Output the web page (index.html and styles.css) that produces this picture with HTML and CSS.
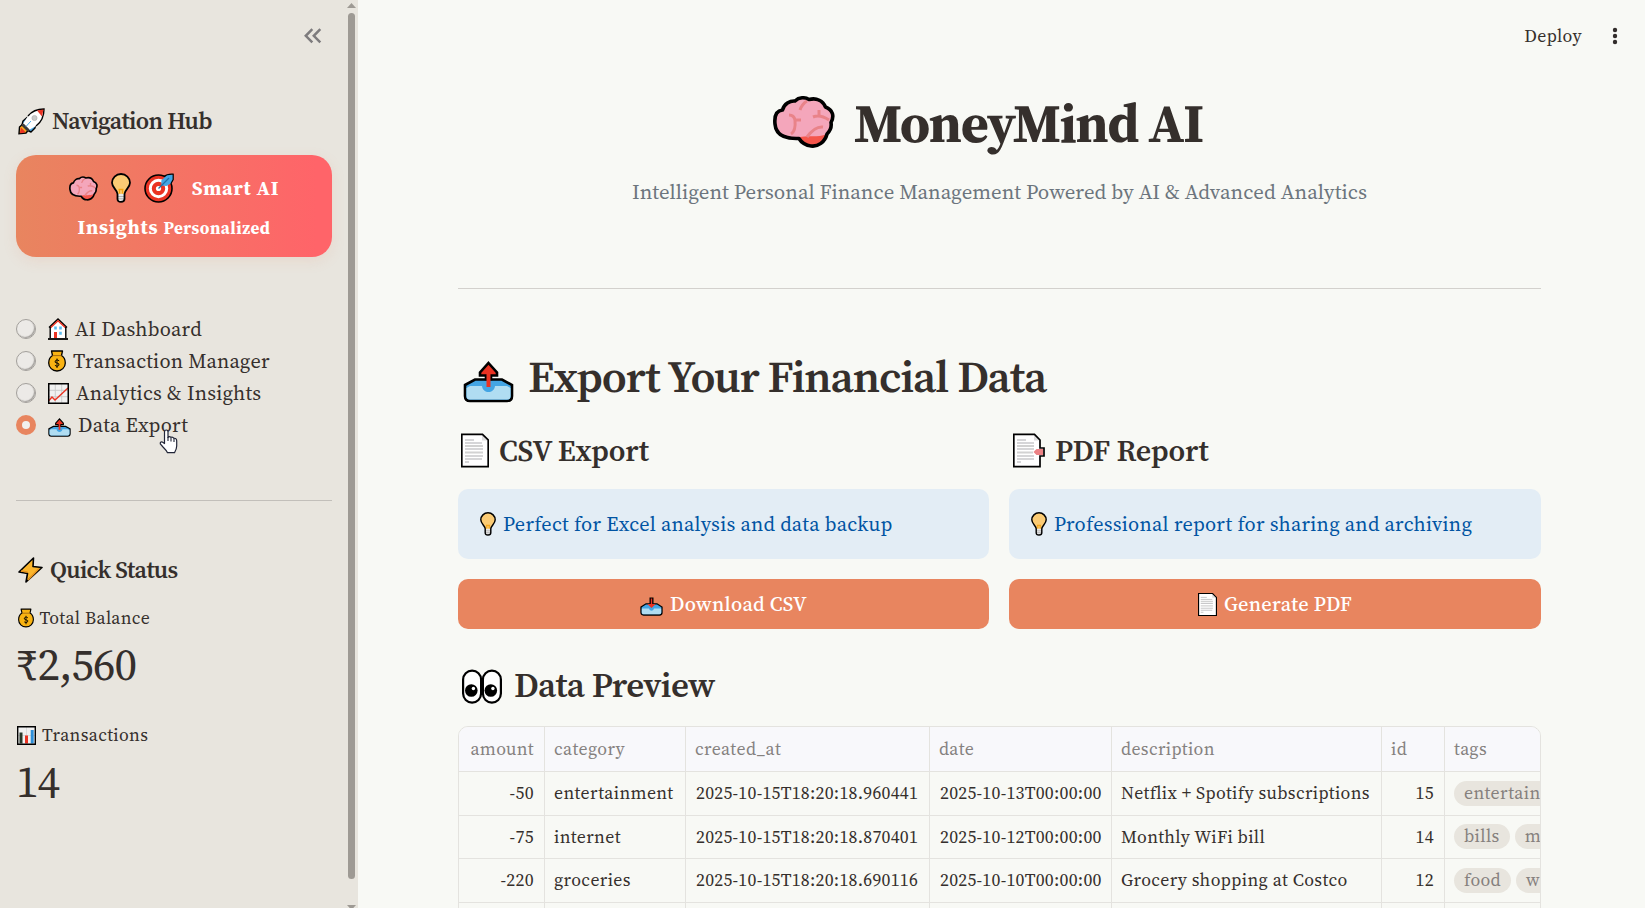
FILE: index.html
```html
<!DOCTYPE html>
<html lang="en">
<head>
<meta charset="utf-8">
<title>MoneyMind AI</title>
<link rel="stylesheet" href="styles.css">
</head>
<body>
<svg class="sprite" aria-hidden="true">
  <symbol id="brain" viewBox="0 0 62 52">
    <path d="M2 28C1 18 5 14.500 9.500 14C11 8 17 4.500 22 5C26 1 32 1 36 3.500C44 1.500 50 5 52.500 11C60 14 61.500 20 58 26.500C59 32 56 36 54 38C52 46 45 51 38 50C33 50 28 46 26 42.500C16 43 3 41 2 28Z" fill="#f4a6bb"/>
    <path d="M27 41C35 39 44 42 54 38C52 46 45 51 38 50C33 50 29 46 27 41Z" fill="#f5564c"/>
    <path d="M16 19Q21 19 22 24H28M22 24Q23 35 18 38M27 14Q29 8 34 5M46 14V20M40 21Q47 18 56 24M34 41Q42 30 50 31" fill="none" stroke="#e98389" stroke-width="3"/>
    <path d="M2 28C1 18 5 14.500 9.500 14C11 8 17 4.500 22 5C26 1 32 1 36 3.500C44 1.500 50 5 52.500 11C60 14 61.500 20 58 26.500C59 32 56 36 54 38C52 46 45 51 38 50C33 50 28 46 26 42.500C16 43 3 41 2 28Z" fill="none" stroke="#000" stroke-width="3.600" stroke-linejoin="round"/>
  </symbol>
  <symbol id="bulb" viewBox="0 0 20 30">
    <path d="M6.500 20.500V26Q6.500 28.500 10 28.500T13.500 26V20.500Z" fill="#e8e8e8"/>
    <path d="M6.500 21C6.500 17 1 15 1 9.800A9 8.800 0 0 1 19 9.800C19 15 13.500 17 13.500 21Z" fill="#fbcb74"/>
    <path d="M8.500 20.500V16.500M11.500 20.500V16.500M7.500 16.500H12.500" stroke="#f5a412" stroke-width="1.300"/>
    <path d="M6.500 23.500h7M6.500 25.800h7" stroke="#999" stroke-width=".7"/>
    <path d="M6.500 21C6.500 17 1 15 1 9.800A9 8.800 0 0 1 19 9.800C19 15 13.500 17 13.500 21V26Q13.500 28.800 10 28.800T6.500 26Z" fill="none" stroke="#000" stroke-width="1.800"/>
  </symbol>
  <symbol id="target" viewBox="0 0 30 30">
    <circle cx="14.500" cy="15.500" r="13.500" fill="#ea3323" stroke="#000" stroke-width="1.600"/>
    <circle cx="14.500" cy="15.500" r="8.200" fill="none" stroke="#fff" stroke-width="3"/>
    <circle cx="14.500" cy="15.500" r="2.600" fill="#fff"/>
    <path d="M17.500 12.500L17.300 7.500L23.500 1.500L29 1.800L29 6L27.500 10L22.500 13Z" fill="#43a5e4"/>
    <path d="M14.500 15.500L25 5" stroke="#1f6fa8" stroke-width="1.200"/>
    <path d="M20 3.500Q23 .8 29.200 1.200V6.500L27 10.500" fill="none" stroke="#000" stroke-width="1.200"/>
  </symbol>
  <symbol id="rocket" viewBox="0 0 27 27">
    <path d="M5 13L9 9.500L14 9L18 14L17 20L13 24L9 22L4 17Z" fill="#4aa9e8" stroke="#000" stroke-width="1.400" stroke-linejoin="round"/>
    <path d="M1.500 19L5 16L10.500 22L8 25L1 25.800Z" fill="#f6a51b" stroke="#000" stroke-width="1.400"/>
    <path d="M4.500 16.500L10 8C14 3 19 1 26 1C26 8 23.500 14 18 18L10 22.500Z" fill="#fff"/>
    <path d="M10 8C14 3 19 1 26 1C26 8 23.500 14 18 18" fill="none" stroke="#000" stroke-width="1.400"/>
    <path d="M3 19.500L7.500 24L5 25L1.800 25.200Z" fill="#ea3323"/>
    <path d="M19 2.500L25.500 1.500L24 8.500Z" fill="#ea3323"/>
    <path d="M4.500 16.500L10.500 22.500" stroke="#3b3b3b" stroke-width="3"/>
    <path d="M8 18.500L13 13" stroke="#4aa9e8" stroke-width="1"/>
    <circle cx="16.500" cy="10" r="2.600" fill="#c9c9c9" stroke="#aaa" stroke-width=".6"/>
  </symbol>
  <symbol id="house" viewBox="0 0 20 22">
    <path d="M3 21V9L10 2.500L17 9V21Z" fill="#fff"/>
    <path d="M1 9.500L10 1L19 9.500" fill="none" stroke="#000" stroke-width="1.400"/>
    <path d="M2.500 9.800L10 2.800L17.500 9.800" fill="none" stroke="#ea3323" stroke-width="1.500"/>
    <path d="M2.200 9V20M17.800 9V20" stroke="#000" stroke-width="1.400"/>
    <path d="M0 21H20" stroke="#000" stroke-width="1.800"/>
    <path d="M6.200 8.500h2.600v3H6.200zM11.200 8.500h2.600v3h-2.600zM11.200 13.800h2.600v3h-2.600z" fill="#5dbdf0"/>
    <path d="M6 14h3v6H6z" fill="#ea3323"/>
  </symbol>
  <symbol id="bag" viewBox="0 0 18 22">
    <path d="M4.500 5.500L3.500 1H14.500L13.500 5.500C16 7 17.300 10 17.300 13A8.300 8 0 0 1 .7 13C.7 10 2 7 4.500 5.500Z" fill="#f9b313" stroke="#000" stroke-width="1.300" stroke-linejoin="round"/>
    <path d="M4.500 5.600H13.500" stroke="#a56b12" stroke-width="1"/>
    <path d="M11.200 10.800Q9 9 7.400 10.700T9 13T10.700 15.500T6.900 15.300M9 8.500V18" fill="none" stroke="#000" stroke-width=".9"/>
  </symbol>
  <symbol id="chart" viewBox="0 0 21 21">
    <path d="M.7.700H20.300V20.300H.7Z" fill="#f1f1f1"/>
    <path d="M1 7.300H20M1 13.700H20M7.300 1V20M13.700 1V20" stroke="#c9c9c9" stroke-width=".9"/>
    <path d="M1 17.500L4 14L7 17L20 5" fill="none" stroke="#ea3323" stroke-width="1.400"/>
    <path d="M.7.700H20.300V20.300H.7Z" fill="none" stroke="#000" stroke-width="1.600"/>
  </symbol>
  <symbol id="bars" viewBox="0 0 19 19">
    <path d="M.7.700H18.300V18.300H.7Z" fill="#f1f1f1"/>
    <path d="M9.500 1V18M1 9.500H18" stroke="#d5d5d5" stroke-width=".8"/>
    <path d="M2.500 6.500h3v11h-3z" fill="#27382a"/><path d="M8 9.500h3v8H8z" fill="#ea3323"/><path d="M13.700 4h3v13.500h-3z" fill="#2e8fd8"/>
    <path d="M.7.700H18.300V18.300H.7Z" fill="none" stroke="#000" stroke-width="1.400"/>
  </symbol>
  <symbol id="outbox" viewBox="0 0 51 42">
    <path d="M2 24L12 18.500H39L49 24V35Q49 40 44 40H7Q2 40 2 35Z" fill="#43a5e4" stroke="#000" stroke-width="2.600"/>
    <path d="M3.500 27L7 25H19C20 33 31 33 32 25H44L47.500 27V35Q47.500 38.600 44 38.600H7Q3.500 38.600 3.500 35Z" fill="#b0ddf2"/>
    <path d="M25.500 2L34 11.500V14.500H28V18H23V14.500H17V11.500Z" fill="#ea3323" stroke="#000" stroke-width="2.600"/>
    <path d="M25.500 26V10" stroke="#ea3323" stroke-width="4"/>
  </symbol>
  <symbol id="inbox" viewBox="0 0 23 19">
    <path d="M1 10L6 6.800H17L22 10V15.500Q22 18 19.500 18H3.500Q1 18 1 15.500Z" fill="#43a5e4" stroke="#000" stroke-width="1.300"/>
    <path d="M1.800 11.500H9C10 14.500 13 14.500 14 11.500H21.200V15.500Q21.200 17.200 19.500 17.200H3.500Q1.800 17.200 1.800 15.500Z" fill="#b0ddf2"/>
    <path d="M9.500 .5H13.500V6.800H9.500Z" fill="#000"/>
    <path d="M11.500 1.500V8M9 7.600H14L11.500 10Z" stroke="#ea3323" stroke-width="1.400" fill="#ea3323"/>
  </symbol>
  <symbol id="page" viewBox="0 0 28 34">
    <path d="M1 1H21.500L27 6.500V33H1Z" fill="#fff"/>
    <path d="M21 1.500V7H27Z" fill="#ddd"/>
    <path d="M4 6.500H13M4 9.500H21M4 15.500H22M4 22.500H22M4 25.500H21M4 28.500H8" stroke="#a4a4a8" stroke-width=".9"/>
    <path d="M4 12.500H22M4 19H22" stroke="#d2d2d2" stroke-width="2"/>
    <path d="M.8.800H21.500L27.200 6.500V33.200H.8Z" fill="none" stroke="#000" stroke-width="1.700"/>
  </symbol>
  <symbol id="tabs" viewBox="0 0 32 34">
    <path d="M1 1H21.500L27 6.500V14.500H31V22.500H27V33H1Z" fill="#fff"/>
    <path d="M21 1.500V7H27Z" fill="#ddd"/>
    <path d="M4 6.500H13M4 9.500H21M4 15.500H21M4 22.500H21M4 25.500H21M4 28.500H8" stroke="#a4a4a8" stroke-width=".9"/>
    <path d="M4 12.500H21M4 19H20" stroke="#d2d2d2" stroke-width="2"/>
    <path d="M20.500 18.500L23.500 15.500H30V21.500H23.500Z" fill="#ec8285"/>
    <path d="M.8.800H21.500L27 6.500V14.500H31V22.500H27V33.200H.8Z" fill="none" stroke="#000" stroke-width="1.700"/>
  </symbol>
  <symbol id="eyes" viewBox="0 0 40 34">
    <rect x="1.100" y="1.100" width="18" height="32" rx="9" fill="#fff" stroke="#000" stroke-width="2.200"/>
    <rect x="20.900" y="1.100" width="18" height="32" rx="9" fill="#fff" stroke="#000" stroke-width="2.200"/>
    <circle cx="9.300" cy="21" r="6.300"/><circle cx="28.800" cy="21" r="6.300"/>
    <circle cx="11.400" cy="19" r="1.700" fill="#fff"/><circle cx="30.900" cy="19" r="1.700" fill="#fff"/>
  </symbol>
  <symbol id="bolt" viewBox="0 0 25 26">
    <path d="M15.500 1L1 15L9.500 16.500L8 25L24 10.500L15 9.500Z" fill="#fbb62c" stroke="#000" stroke-width="1.600" stroke-linejoin="round"/>
    <path d="M3 14L9.500 15M10 23L21 11.500" stroke="#e8941e" stroke-width="1.500"/>
  </symbol>
</svg>

<div class="app">
  <aside class="sidebar">
    <div class="side-content">
      <div class="side-top">
        <svg class="collapse" viewBox="0 0 18 16"><path d="M8.300 1.200L1.800 7.800L8.300 14.400M16.300 1.200L9.800 7.800L16.300 14.400" fill="none" stroke="#7d7b7d" stroke-width="2.500"/></svg>
      </div>
      <h3 class="side-heading nav-heading"><svg class="i-rocket"><use href="#rocket"/></svg><span>Navigation Hub</span></h3>
      <div class="hub-card">
        <div class="hub-line"><svg class="i-brain-s"><use href="#brain"/></svg><svg class="i-bulb-m"><use href="#bulb"/></svg><svg class="i-target"><use href="#target"/></svg><span class="hub-smart">Smart AI</span></div>
        <div class="hub-line hub-second"><span>Insights</span> <small>Personalized</small></div>
      </div>
      <nav class="menu">
        <label class="option"><i class="radio"></i><svg class="i-house"><use href="#house"/></svg><span>AI Dashboard</span></label>
        <label class="option"><i class="radio"></i><svg class="i-bag"><use href="#bag"/></svg><span>Transaction Manager</span></label>
        <label class="option"><i class="radio"></i><svg class="i-chart"><use href="#chart"/></svg><span>Analytics &amp; Insights</span></label>
        <label class="option"><i class="radio checked"></i><svg class="i-outbox-s"><use href="#outbox"/></svg><span>Data Export</span></label>
      </nav>
      <hr class="side-rule">
      <h3 class="side-heading"><svg class="i-bolt"><use href="#bolt"/></svg><span>Quick Status</span></h3>
      <div class="metric">
        <div class="metric-label"><svg class="i-bag-s"><use href="#bag"/></svg><span>Total Balance</span></div>
        <div class="metric-value">₹2,560</div>
      </div>
      <div class="metric">
        <div class="metric-label"><svg class="i-bars"><use href="#bars"/></svg><span>Transactions</span></div>
        <div class="metric-value">14</div>
      </div>
    </div>
    <div class="scrollbar"><i class="arrow-up"></i><i class="thumb"></i><i class="arrow-down"></i></div>
  </aside>

  <main class="main">
    <header class="toolbar">
      <span>Deploy</span>
      <svg class="dots" viewBox="0 0 6 18"><g fill="#322d2b"><circle cx="3" cy="3" r="2.200"/><circle cx="3" cy="9" r="2.200"/><circle cx="3" cy="15" r="2.200"/></g></svg>
    </header>
    <div class="content">
      <h1 class="title"><svg class="i-brain"><use href="#brain"/></svg><span>MoneyMind AI</span></h1>
      <p class="subtitle">Intelligent Personal Finance Management Powered by AI &amp; Advanced Analytics</p>
      <hr class="rule">
      <h1 class="export-heading"><svg class="i-outbox"><use href="#outbox"/></svg><span>Export Your Financial Data</span></h1>
      <div class="columns">
        <section class="column">
          <h3 class="col-heading"><svg class="i-page"><use href="#page"/></svg><span>CSV Export</span></h3>
          <div class="info"><svg class="i-bulb"><use href="#bulb"/></svg><span>Perfect for Excel analysis and data backup</span></div>
          <button class="button"><svg class="i-inbox"><use href="#inbox"/></svg><span>Download CSV</span></button>
        </section>
        <section class="column">
          <h3 class="col-heading"><svg class="i-tabs"><use href="#tabs"/></svg><span>PDF Report</span></h3>
          <div class="info"><svg class="i-bulb"><use href="#bulb"/></svg><span>Professional report for sharing and archiving</span></div>
          <button class="button"><svg class="i-page-s"><use href="#page"/></svg><span>Generate PDF</span></button>
        </section>
      </div>
      <h2 class="preview-heading"><svg class="i-eyes"><use href="#eyes"/></svg><span>Data Preview</span></h2>
      <div class="table-wrap">
        <table class="data">
          <colgroup><col class="c-amount"><col class="c-category"><col class="c-created"><col class="c-date"><col class="c-desc"><col class="c-id"><col class="c-tags"></colgroup>
          <thead><tr><th class="num">amount</th><th>category</th><th>created_at</th><th>date</th><th>description</th><th>id</th><th>tags</th></tr></thead>
          <tbody>
            <tr><td class="num">-50</td><td>entertainment</td><td class="stamp">2025-10-15T18:20:18.960441</td><td class="stamp">2025-10-13T00:00:00</td><td>Netflix + Spotify subscriptions</td><td class="num">15</td><td><div class="tags"><span class="tag">entertainment</span></div></td></tr>
            <tr><td class="num">-75</td><td>internet</td><td class="stamp">2025-10-15T18:20:18.870401</td><td class="stamp">2025-10-12T00:00:00</td><td>Monthly WiFi bill</td><td class="num">14</td><td><div class="tags"><span class="tag">bills</span><span class="tag">monthly</span></div></td></tr>
            <tr><td class="num">-220</td><td>groceries</td><td class="stamp">2025-10-15T18:20:18.690116</td><td class="stamp">2025-10-10T00:00:00</td><td>Grocery shopping at Costco</td><td class="num">12</td><td><div class="tags"><span class="tag">food</span><span class="tag">weekly</span></div></td></tr>
            <tr><td></td><td></td><td></td><td></td><td></td><td></td><td></td></tr>
          </tbody>
        </table>
      </div>
    </div>
  </main>
</div>
<svg class="cursor" viewBox="0 0 19 25"><path d="M5.500 14.500V3Q5.500 1 7.300 1T9 3V8.500Q10 6.800 12 8.300Q13.700 7.500 15 9.300Q17.700 9 17.700 12V17Q17.700 20 15.500 23.700H8.500Q7.500 21.500 4 18L1.300 14.800Q1 12.500 3.300 13Z" fill="#fff" stroke="#222638" stroke-width="1.200" stroke-linejoin="round"/><path d="M9 8V12M12 8.500V12.500M15 9.500V13" stroke="#222638" stroke-width="1.100"/></svg>
</body>
</html>
```
FILE: styles.css
```css
* { box-sizing: border-box; }
body {
  margin: 0;
  height: 908px;
  overflow: hidden;
  font-family: "Source Serif 4", "Source Serif Pro", "Noto Serif", "Liberation Serif", serif;
  font-size: 20.300px;
  letter-spacing: .25px;
  color: #352f2c;
  background: #f8f9f5;
  white-space: nowrap;
}
h1, h2, h3, p, hr { margin: 0; font-weight: 600; }
svg { display: block; flex: none; }
.sprite { position: absolute; width: 0; height: 0; }
.app { display: flex; height: 908px; }

/* Sidebar */
.sidebar { display: flex; flex: none; width: 358px; background: #e8e5de; }
.side-content { width: 347px; padding: 0 15px 0 16px; }
.side-top { display: flex; justify-content: flex-end; height: 106px; padding: 28px 10px 0 0; }
.collapse { width: 18px; height: 16px; }
.side-heading { display: flex; align-items: center; height: 30px; font-size: 24px; line-height: 30px; letter-spacing: -.65px; }
.i-rocket { width: 27px; height: 27px; margin: 0 7px 0 2px; }
.i-bolt { width: 25px; height: 26px; margin: 0 7px 0 2px; }
.hub-card {
  height: 102px;
  margin-top: 19px;
  padding-top: 14px;
  border-radius: 20px;
  background: linear-gradient(90deg, #e8855f, #ff6469 95%);
  box-shadow: 0 4px 14px rgba(232, 133, 95, .13);
  color: #fff;
  font-size: 20px;
  font-weight: 700;
  letter-spacing: .75px;
}
.hub-line { display: flex; align-items: center; justify-content: center; height: 38px; }
.i-brain-s { width: 29px; height: 25px; }
.i-bulb-m { width: 20px; height: 30px; margin-left: 13px; }
.i-target { width: 30px; height: 30px; margin-left: 13px; }
.hub-smart { margin-left: 18px; }
.hub-second { align-items: baseline; gap: 5px; padding-top: 6px; }
.hub-second small { font-size: 17px; letter-spacing: .5px; }
.menu { margin-top: 56px; }
.option { display: flex; align-items: center; height: 32px; }
.radio {
  width: 20px; height: 20px; margin-right: 12px;
  border-radius: 50%;
  background: #eceae7;
  border: 1px solid #a3a09c;
  box-shadow: inset -1px -1px 1px #a3a09c;
}
.radio.checked { border: 6.500px solid #e8855f; background: #f1f0ed; box-shadow: none; }
.i-house { width: 20px; height: 22px; margin-right: 7px; }
.i-bag { width: 18px; height: 22px; margin-right: 7px; }
.i-chart { width: 21px; height: 21px; margin-right: 7px; }
.i-outbox-s { width: 23px; height: 19px; margin: 5px 7px 0 0; }
.side-rule, .rule { height: 1px; border: 0; background: #c2bfba; }
.side-rule { margin: 59px 0 54px; }
.metric { height: 117px; }
.metric-label { display: flex; align-items: center; height: 30px; margin-top: 18px; font-size: 17.800px; letter-spacing: .35px; }
.metric + .metric .metric-label { margin-top: 0; }
.metric + .metric { padding-top: 0; }
.i-bag-s { width: 16px; height: 20px; margin: 0 6px 0 1.500px; }
.i-bars { width: 19px; height: 19px; margin: 0 6px 0 1px; }
.metric-value { font-size: 45px; line-height: 62px; height: 69px; letter-spacing: -1px; }
.scrollbar { width: 11px; }
.scrollbar i { display: block; }
.arrow-up { width: 9px; height: 5px; margin-top: 3px; background: #9e9a94; clip-path: polygon(50% 0, 100% 100%, 0 100%); }
.thumb { width: 7px; height: 866px; margin: 5px 0 0 1px; border-radius: 4px; background: #9e9a94; }
.arrow-down { width: 9px; height: 5px; margin-top: 26px; background: #9e9a94; clip-path: polygon(0 0, 100% 0, 50% 100%); }

/* Main area */
.main { flex: 1; height: 908px; overflow: hidden; }
.toolbar { display: flex; align-items: center; justify-content: flex-end; gap: 30px; height: 72px; padding-right: 27px; font-size: 17.800px; letter-spacing: .35px; }
.dots { width: 6px; height: 18px; }
.content { width: 1083px; margin-left: 100px; }
.title { display: flex; align-items: center; justify-content: center; height: 102px; padding-right: 23px; font-size: 54px; font-weight: 700; letter-spacing: -1.350px; }
.i-brain { width: 62px; height: 52px; margin: 0 19px 2px 0; }
.subtitle { height: 40px; margin-top: -2px; line-height: 40px; text-align: center; font-size: 20.800px; font-weight: 400; letter-spacing: .030px; color: #6c757d; }
.rule { margin-top: 76px; background: #d3d1cd; }
.export-heading { display: flex; align-items: center; height: 72px; margin-top: 51px; font-size: 45px; letter-spacing: -1.120px; }
.i-outbox { width: 51px; height: 42px; margin: 11px 14px 0 5px; }
.columns { display: flex; gap: 20px; margin-top: 18px; }
.column { flex: 0 0 531px; }
.column + .column { flex-basis: 532px; }
.col-heading { display: flex; align-items: center; height: 40px; font-size: 30px; letter-spacing: -.200px; }
.i-page { width: 28px; height: 35px; margin: 0 10px 0 3px; }
.i-tabs { width: 32px; height: 35px; margin: 0 10px 0 4px; }
.info { display: flex; align-items: center; height: 70px; margin-top: 19px; padding-left: 22px; border-radius: 10px; background: #e3edf5; color: #0054a3; }
.i-bulb { width: 16px; height: 24px; margin-right: 7px; }
.button {
  display: flex; align-items: center; justify-content: center;
  width: 100%; height: 50px; margin-top: 20px; padding: 0;
  border: 0; border-radius: 10px; background: #e8855f;
  color: #fff; font: inherit; font-weight: 500; letter-spacing: .25px;
}
.i-inbox { width: 23px; height: 19px; margin: 4px 7px 0 0; }
.i-page-s { width: 19px; height: 23px; margin-right: 7px; }
.preview-heading { display: flex; align-items: center; height: 50px; margin-top: 31px; font-size: 35px; letter-spacing: -.600px; }
.i-eyes { width: 40px; height: 35px; margin: 3px 12px 0 4px; }
.table-wrap { height: 220px; margin-top: 16px; overflow: hidden; border: 1px solid #e4e3df; border-radius: 10px; }
.data { width: 1287px; table-layout: fixed; border-collapse: separate; border-spacing: 0; font-size: 17.800px; letter-spacing: .350px; }
.c-amount { width: 86px; }
.c-category { width: 141px; }
.c-created { width: 244px; }
.c-date { width: 182px; }
.c-desc { width: 270px; }
.c-id { width: 63px; }
.c-tags { width: 301px; }
.data th, .data td {
  height: 43.500px; padding: 0 9px; overflow: hidden;
  border: solid #e4e3df; border-width: 0 1px 1px 0;
  text-align: left; font-weight: 400; line-height: 24px;
}
.data th { height: 45px; background: #f8f8fb; color: #85817f; }
.data .num { text-align: right; padding-right: 10px; }
.data .stamp { padding-left: 10px; letter-spacing: .250px; }
.tags { display: flex; gap: 5px; }
.tag { height: 25px; padding: 0 10px; border-radius: 13px; background: #e8e5de; color: #85807d; line-height: 25px; }

/* Pointer over the selected menu item */
.cursor { position: absolute; left: 159px; top: 429px; width: 19px; height: 25px; }
```
